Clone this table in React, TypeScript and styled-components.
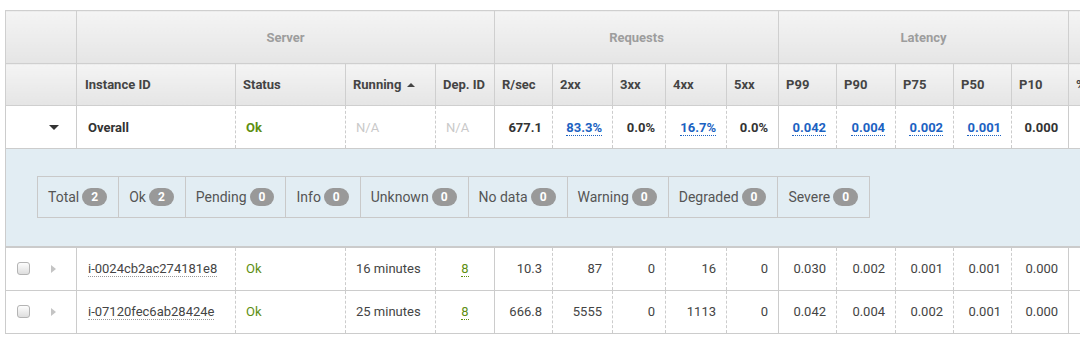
import React from 'react';
import styled, { createGlobalStyle } from 'styled-components';

const Global = createGlobalStyle`
  html, body { margin: 0; padding: 0; background: #fff; overflow: hidden; }
  body { font-family: Roboto, "Noto Sans", "Liberation Sans", Arial, sans-serif; }
`;

const Page = styled.div`
  padding: 10px 0 0 5px;
  width: max-content;
`;

const Table = styled.table`
  border-collapse: collapse;
  table-layout: fixed;
  font-size: 13px;
  color: #444;
`;

const headerBg = 'linear-gradient(#f4f4f4, #e5e5e5)';

const GroupRow = styled.tr`
  height: 53px;
`;

const GroupTh = styled.th`
  background: ${headerBg};
  border: 1px solid #cfcfcf;
  color: #9d9d9d;
  font-weight: 700;
  font-size: 13px;
  text-align: center;
  padding: 0;
`;

const HeadRow = styled.tr`
  height: 42px;
`;

const ColTh = styled.th`
  background: ${headerBg};
  border: 1px solid #cfcfcf;
  color: #444;
  font-weight: 700;
  font-size: 13px;
  text-align: left;
  padding: 0 7px;
  white-space: nowrap;
  overflow: hidden;
`;

const SortUp = styled.span`
  display: inline-block;
  width: 0;
  height: 0;
  margin-left: 6px;
  vertical-align: 2px;
  border-left: 4px solid transparent;
  border-right: 4px solid transparent;
  border-bottom: 4px solid #444;
`;

const BodyRow = styled.tr<{ $overall?: boolean }>`
  height: 43px;
  font-weight: ${(p) => (p.$overall ? 700 : 400)};
  color: ${(p) => (p.$overall ? '#333' : '#444')};
`;

const Td = styled.td<{ $align?: 'left' | 'right' | 'center'; $solid?: boolean }>`
  padding: 0 10px;
  border-top: 1px solid #ccc;
  border-bottom: 1px solid #ccc;
  border-left: 1px ${(p) => (p.$solid ? 'solid' : 'dashed')} #ccc;
  border-right: 1px dashed #ccc;
  text-align: ${(p) => p.$align ?? 'left'};
  white-space: nowrap;
  overflow: hidden;
`;

const ExpandCell = styled.td`
  padding: 0 0 0 11px;
  border: 1px solid #ccc;
`;

const ExpandInner = styled.div`
  display: flex;
  align-items: center;
`;

const Check = styled.span`
  display: inline-block;
  width: 11px;
  height: 11px;
  border: 1px solid #b4b4b4;
  border-radius: 3px;
  background: linear-gradient(#fdfdfd, #dedede);
`;

const CaretRight = styled.span`
  display: inline-block;
  width: 0;
  height: 0;
  margin-left: 21px;
  border-top: 4.5px solid transparent;
  border-bottom: 4.5px solid transparent;
  border-left: 5px solid #c4c4c4;
`;

const CaretDown = styled.span`
  display: inline-block;
  width: 0;
  height: 0;
  margin-left: 32px;
  border-left: 5px solid transparent;
  border-right: 5px solid transparent;
  border-top: 5px solid #333;
`;

const Ok = styled.span`
  color: #5e8f12;
`;

const Muted = styled.span`
  color: #c9c9c9;
  font-weight: 400;
`;

const MetricLink = styled.span`
  color: #1c62c2;
  border-bottom: 1px dotted #1c62c2;
`;

const IdLink = styled.span`
  color: #444;
  border-bottom: 1px dotted #999;
`;

const DepLink = styled.span`
  color: #5e8f12;
  border-bottom: 1px dotted #5e8f12;
`;

const PanelRow = styled.tr``;

const PanelCell = styled.td`
  background: #e2edf3;
  padding: 27px 0 28px 31px;
  border-left: 1px solid #ccc;
  border-top: 1px solid #ccc;
  border-bottom: 2px solid #cbcbcb;
`;

const FilterBar = styled.div`
  display: inline-flex;
  border: 1px solid #c9c9c9;
`;

const FilterItem = styled.div`
  display: flex;
  align-items: center;
  height: 40px;
  padding: 0 11px 0 10px;
  font-size: 14px;
  color: #555;
  & + & {
    border-left: 1px solid #c9c9c9;
  }
`;

const Badge = styled.span`
  margin-left: 3px;
  background: #999;
  color: #fff;
  font-weight: 700;
  font-size: 12px;
  height: 18px;
  line-height: 18px;
  border-radius: 9px;
  padding: 0 9px;
`;

const widths = [71, 159, 110, 90, 59, 58, 60, 53, 61, 52, 58, 59, 58, 58, 57, 70, 70];

const filters: [string, number][] = [
  ['Total', 2],
  ['Ok', 2],
  ['Pending', 0],
  ['Info', 0],
  ['Unknown', 0],
  ['No data', 0],
  ['Warning', 0],
  ['Degraded', 0],
  ['Severe', 0],
];

type Row = {
  id: string;
  running: string;
  rsec: string;
  req: string[];
  lat: string[];
};

const rows: Row[] = [
  {
    id: 'i-0024cb2ac274181e8',
    running: '16 minutes',
    rsec: '10.3',
    req: ['87', '0', '16', '0'],
    lat: ['0.030', '0.002', '0.001', '0.001', '0.000'],
  },
  {
    id: 'i-07120fec6ab28424e',
    running: '25 minutes',
    rsec: '666.8',
    req: ['5555', '0', '1113', '0'],
    lat: ['0.042', '0.004', '0.002', '0.001', '0.000'],
  },
];

const colHeads = ['R/sec', '2xx', '3xx', '4xx', '5xx', 'P99', 'P90', 'P75', 'P50', 'P10', '%CPU', 'Load'];

export default function App() {
  const total = widths.reduce((a, b) => a + b, 0);
  return (
    <>
      <Global />
      <Page>
        <Table style={{ width: total }}>
          <colgroup>
            {widths.map((w, i) => (
              <col key={i} style={{ width: w }} />
            ))}
          </colgroup>
          <thead>
            <GroupRow>
              <GroupTh />
              <GroupTh colSpan={4}>Server</GroupTh>
              <GroupTh colSpan={5}>Requests</GroupTh>
              <GroupTh colSpan={5}>Latency</GroupTh>
              <GroupTh colSpan={2}>Host</GroupTh>
            </GroupRow>
            <HeadRow>
              <ColTh />
              <ColTh style={{ paddingLeft: 8 }}>Instance ID</ColTh>
              <ColTh>Status</ColTh>
              <ColTh>
                Running
                <SortUp />
              </ColTh>
              <ColTh>Dep. ID</ColTh>
              {colHeads.map((h) => (
                <ColTh key={h}>{h}</ColTh>
              ))}
            </HeadRow>
          </thead>
          <tbody>
            <BodyRow $overall>
              <ExpandCell>
                <ExpandInner>
                  <CaretDown />
                </ExpandInner>
              </ExpandCell>
              <Td $solid style={{ paddingLeft: 11 }}>Overall</Td>
              <Td>
                <Ok>Ok</Ok>
              </Td>
              <Td>
                <Muted>N/A</Muted>
              </Td>
              <Td>
                <Muted>N/A</Muted>
              </Td>
              <Td $solid $align="right">677.1</Td>
              <Td $align="right">
                <MetricLink>83.3%</MetricLink>
              </Td>
              <Td $align="right">0.0%</Td>
              <Td $align="right">
                <MetricLink>16.7%</MetricLink>
              </Td>
              <Td $align="right">0.0%</Td>
              <Td $solid $align="right">
                <MetricLink>0.042</MetricLink>
              </Td>
              <Td $align="right">
                <MetricLink>0.004</MetricLink>
              </Td>
              <Td $align="right">
                <MetricLink>0.002</MetricLink>
              </Td>
              <Td $align="right">
                <MetricLink>0.001</MetricLink>
              </Td>
              <Td $align="right">0.000</Td>
              <Td $solid $align="right"></Td>
              <Td $align="right"></Td>
            </BodyRow>
            <PanelRow>
              <PanelCell colSpan={widths.length}>
                <FilterBar>
                  {filters.map(([name, n]) => (
                    <FilterItem key={name}>
                      {name}
                      <Badge>{n}</Badge>
                    </FilterItem>
                  ))}
                </FilterBar>
              </PanelCell>
            </PanelRow>
            {rows.map((r) => (
              <BodyRow key={r.id}>
                <ExpandCell>
                  <ExpandInner>
                    <Check />
                    <CaretRight />
                  </ExpandInner>
                </ExpandCell>
                <Td $solid style={{ paddingLeft: 11 }}>
                  <IdLink>{r.id}</IdLink>
                </Td>
                <Td>
                  <Ok>Ok</Ok>
                </Td>
                <Td>{r.running}</Td>
                <Td $align="center">
                  <DepLink>8</DepLink>
                </Td>
                <Td $solid $align="right">{r.rsec}</Td>
                {r.req.map((v, i) => (
                  <Td key={'q' + i} $align="right">
                    {v}
                  </Td>
                ))}
                {r.lat.map((v, i) => (
                  <Td key={'l' + i} $solid={i === 0} $align="right">
                    {v}
                  </Td>
                ))}
                <Td $solid $align="right"></Td>
                <Td $align="right"></Td>
              </BodyRow>
            ))}
          </tbody>
        </Table>
      </Page>
    </>
  );
}
